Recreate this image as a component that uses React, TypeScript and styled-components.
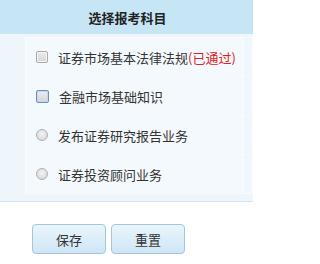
import React from "react";
import styled, { createGlobalStyle } from "styled-components";

const Global = createGlobalStyle`
  html, body { margin: 0; padding: 0; background: #ffffff; }
  body { font-family: "Noto Sans CJK SC", "Noto Sans", sans-serif; }
`;

const Panel = styled.div`
  width: 253px;
  height: 264px;
  background: #ffffff;
  overflow: hidden;
`;

const Header = styled.div`
  height: 34px;
  background: #c6e6f6;
  display: flex;
  align-items: center;
  justify-content: center;
  font-size: 13px;
  font-weight: bold;
  color: #222;
  padding-left: 2px;
`;

const Body = styled.div`
  background: #eef6fc;
  border-bottom: 1px solid #d3e5ef;
  padding: 4px 0 7px 25px;
  height: 156px;
`;

const Row = styled.div`
  display: flex;
  height: 38px;
  border-top: 1px solid #f8fbfe;
  border-bottom: 1px solid #f8fbfe;
  margin-top: -1px;
`;

const Cell = styled.div`
  flex: 1;
  display: flex;
  align-items: center;
  padding-left: 10px;
  background: #f3f9fd;
  border-left: 1px solid #f9fcff;
  border-right: 1px solid #f9fcff;
  font-size: 13px;
  color: #333;
  white-space: nowrap;
`;

const Side = styled.div`
  width: 8px;
  background: #eff7fc;
  border-right: 1px solid #f9fcff;
`;

const Box = styled.span<{ $focus?: boolean }>`
  width: ${(p) => (p.$focus ? 11 : 10)}px;
  height: ${(p) => (p.$focus ? 11 : 10)}px;
  border: 1px solid ${(p) => (p.$focus ? "#6c8fc8" : "#a9a9a9")};
  border-radius: 2px;
  background: linear-gradient(#ececec, #d6d6d6);
  box-shadow: inset 0 0 0 1px ${(p) => (p.$focus ? "#c9d6ec" : "#f4f4f4")};
  margin-right: 10px;
  flex: none;
`;

const Radio = styled.span`
  width: 10px;
  height: 10px;
  border: 1px solid #b0b0b0;
  border-radius: 50%;
  background: radial-gradient(circle at 50% 40%, #f4f4f4, #d2d2d2);
  margin-right: 10px;
  flex: none;
`;

const Passed = styled.span`
  color: #e02020;
`;

const Footer = styled.div`
  display: flex;
  gap: 5px;
  padding: 22px 0 0 32px;
`;

const Button = styled.button`
  width: 74px;
  height: 30px;
  border: 1px solid #a3c6da;
  border-radius: 4px;
  background: linear-gradient(#eaf5fc, #cfe6f5);
  font-family: "Noto Sans CJK SC", "Noto Sans", sans-serif;
  font-size: 13px;
  color: #333;
  padding: 0;
`;

export default function App() {
  return (
    <>
      <Global />
      <Panel>
        <Header>选择报考科目</Header>
        <Body>
          <Row>
            <Cell>
              <Box />
              证券市场基本法律法规<Passed>(已通过)</Passed>
            </Cell>
            <Side />
          </Row>
          <Row>
            <Cell>
              <Box $focus />
              金融市场基础知识
            </Cell>
            <Side />
          </Row>
          <Row>
            <Cell>
              <Radio />
              发布证券研究报告业务
            </Cell>
            <Side />
          </Row>
          <Row>
            <Cell>
              <Radio />
              证券投资顾问业务
            </Cell>
            <Side />
          </Row>
        </Body>
        <Footer>
          <Button>保存</Button>
          <Button>重置</Button>
        </Footer>
      </Panel>
    </>
  );
}
